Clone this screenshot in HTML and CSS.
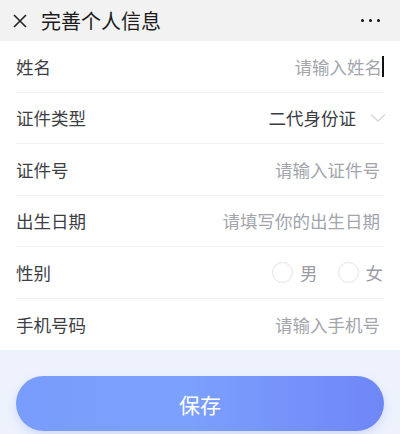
FILE: index.html
```html
<!DOCTYPE html>
<html lang="zh-CN">
<head>
<meta charset="utf-8">
<title>完善个人信息</title>
<link rel="stylesheet" href="styles.css">
</head>
<body>
<div class="page">
  <header class="topbar">
    <svg class="close" width="16" height="16" viewBox="0 0 16 16"><path d="M2 2 L14 14 M14 2 L2 14" stroke="#222" stroke-width="1.6" fill="none"/></svg>
    <h1 class="title">完善个人信息</h1>
    <div class="more"><span></span><span></span><span></span></div>
  </header>
  <section class="form">
    <div class="row">
      <span class="label">姓名</span>
      <span class="value placeholder">请输入姓名<i class="caret"></i></span>
    </div>
    <div class="row">
      <span class="label">证件类型</span>
      <span class="value filled">二代身份证<svg class="chev" width="16" height="10" viewBox="0 0 16 10"><path d="M1 1.5 L8 8 L15 1.5" stroke="#d6d7dc" stroke-width="1.3" fill="none"/></svg></span>
    </div>
    <div class="row">
      <span class="label">证件号</span>
      <span class="value placeholder">请输入证件号</span>
    </div>
    <div class="row">
      <span class="label">出生日期</span>
      <span class="value placeholder">请填写你的出生日期</span>
    </div>
    <div class="row">
      <span class="label">性别</span>
      <span class="value radios">
        <span class="radio"><i class="circle"></i>男</span>
        <span class="radio"><i class="circle"></i>女</span>
      </span>
    </div>
    <div class="row last">
      <span class="label">手机号码</span>
      <span class="value placeholder">请输入手机号</span>
    </div>
  </section>
  <footer class="actions">
    <button class="save">保存</button>
  </footer>
</div>
</body>
</html>
```
FILE: styles.css
```css
* { box-sizing: border-box; }
html, body { margin: 0; padding: 0; }
body {
  width: 400px;
  height: 434px;
  overflow: hidden;
  font-family: "Noto Sans CJK SC", "Noto Sans", sans-serif;
  background: #eef2fd;
}
.page { display: flex; flex-direction: column; }
.topbar {
  height: 41px;
  background: #f2f2f2;
  display: flex;
  align-items: center;
  padding: 0 16px 0 12px;
}
.close { flex: none; margin-right: 13px; }
.title {
  margin: 0;
  font-size: 20px;
  font-weight: 400;
  color: #1c1c1c;
  flex: 1;
  line-height: 1;
}
.more { display: flex; gap: 4.5px; margin-right: 4px; }
.more span { width: 3.5px; height: 3.5px; border-radius: 50%; background: #111; }
.form { background: #fff; }
.row {
  height: 51.5px;
  margin: 0 16px;
  border-bottom: 1px solid #f1f1f3;
  display: flex;
  align-items: center;
  justify-content: space-between;
}
.row.last { border-bottom: none; }
.label { font-size: 17.5px; color: #3d3f45; }
.value { font-size: 17.5px; display: flex; align-items: center; margin-right: 4px; }
.placeholder { color: #a3a5ad; }
.filled { color: #3a3c42; margin-right: -2px; }
.chev { margin-left: 14px; }
.caret { display: inline-block; width: 2px; height: 21px; background: #111; margin-right: -4px; }
.radios { gap: 20px; color: #9a9ca4; margin-right: 1px; }
.radio { display: flex; align-items: center; }
.circle {
  width: 21px; height: 21px; border-radius: 50%;
  border: 1.5px solid #e2e3e6;
  margin-right: 7px;
  display: inline-block;
}
.actions { padding: 26px 16px 0 16px; height: 84px; }
.save {
  width: 368px;
  height: 55px;
  border: none;
  border-radius: 28px;
  background: linear-gradient(90deg, #789cfb 0%, #7ca1fd 45%, #6f86f7 100%);
  box-shadow: 0 4px 10px rgba(120, 150, 245, 0.25);
  color: #fff;
  font-family: "Noto Sans CJK SC", sans-serif;
  font-size: 21px;
  display: block;
  padding: 0;
}
```
